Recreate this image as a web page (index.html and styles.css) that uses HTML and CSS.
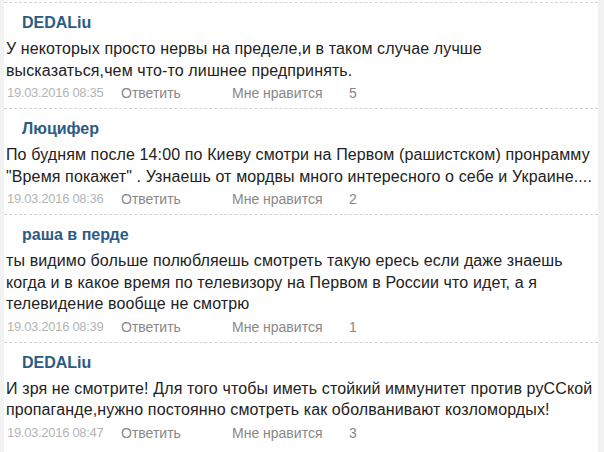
FILE: index.html
```html
<!DOCTYPE html>
<html>
<head>
<meta charset="utf-8">
<link rel="stylesheet" href="styles.css">
</head>
<body>
<div class="page">
  <div class="comment">
    <div class="author">DEDALiu</div>
    <div class="text">У некоторых просто нервы на пределе,и в таком случае лучше высказаться,чем что-то лишнее предпринять.</div>
    <div class="meta"><span class="date">19.03.2016 08:35</span><span class="reply">Ответить</span><span class="like">Мне нравится</span><span class="count">5</span></div>
  </div>
  <div class="comment">
    <div class="author">Люцифер</div>
    <div class="text">По будням после 14:00 по Киеву смотри на Первом (рашистском) пронрамму "Время покажет" . Узнаешь от мордвы много интересного о себе и Украине....</div>
    <div class="meta"><span class="date">19.03.2016 08:36</span><span class="reply">Ответить</span><span class="like">Мне нравится</span><span class="count">2</span></div>
  </div>
  <div class="comment">
    <div class="author">раша в перде</div>
    <div class="text">ты видимо больше полюбляешь смотреть такую ересь если даже знаешь когда и в какое время по телевизору на Первом в России что идет, а я телевидение вообще не смотрю</div>
    <div class="meta"><span class="date">19.03.2016 08:39</span><span class="reply">Ответить</span><span class="like">Мне нравится</span><span class="count">1</span></div>
  </div>
  <div class="comment">
    <div class="author">DEDALiu</div>
    <div class="text">И зря не смотрите! Для того чтобы иметь стойкий иммунитет против руССкой пропаганде,нужно постоянно смотреть как оболванивают козломордых!</div>
    <div class="meta"><span class="date">19.03.2016 08:47</span><span class="reply">Ответить</span><span class="like">Мне нравится</span><span class="count">3</span></div>
  </div>
</div>
</body>
</html>
```

FILE: styles.css
```css
html, body {
  margin: 0;
  padding: 0;
}
body {
  background: #f2f2f2;
  font-family: "Liberation Sans", Arial, sans-serif;
  width: 604px;
  height: 452px;
  overflow: hidden;
}
.page {
  background: #fff;
  margin: 0 6px 0 4px;
  padding-top: 2px;
  height: 450px;
}
.comment {
  border-top: 1px dashed #d4d4d4;
  padding: 10px 0 3px 2px;
}
.author {
  font-size: 16px;
  font-weight: bold;
  color: #2c5b85;
  line-height: 20px;
  padding-left: 16px;
  margin-bottom: 5px;
}
.text {
  font-size: 16px;
  line-height: 21.5px;
  letter-spacing: 0.12px;
  color: #222;
  padding-right: 2px;
}
.meta {
  display: flex;
  font-size: 14px;
  line-height: 24px;
  color: #888;
  padding-left: 1px;
}
.date {
  color: #b4b4b4;
  font-size: 13px;
  letter-spacing: -0.3px;
  width: 114px;
}
.reply {
  width: 111px;
}
.like {
  width: 117px;
}
```
